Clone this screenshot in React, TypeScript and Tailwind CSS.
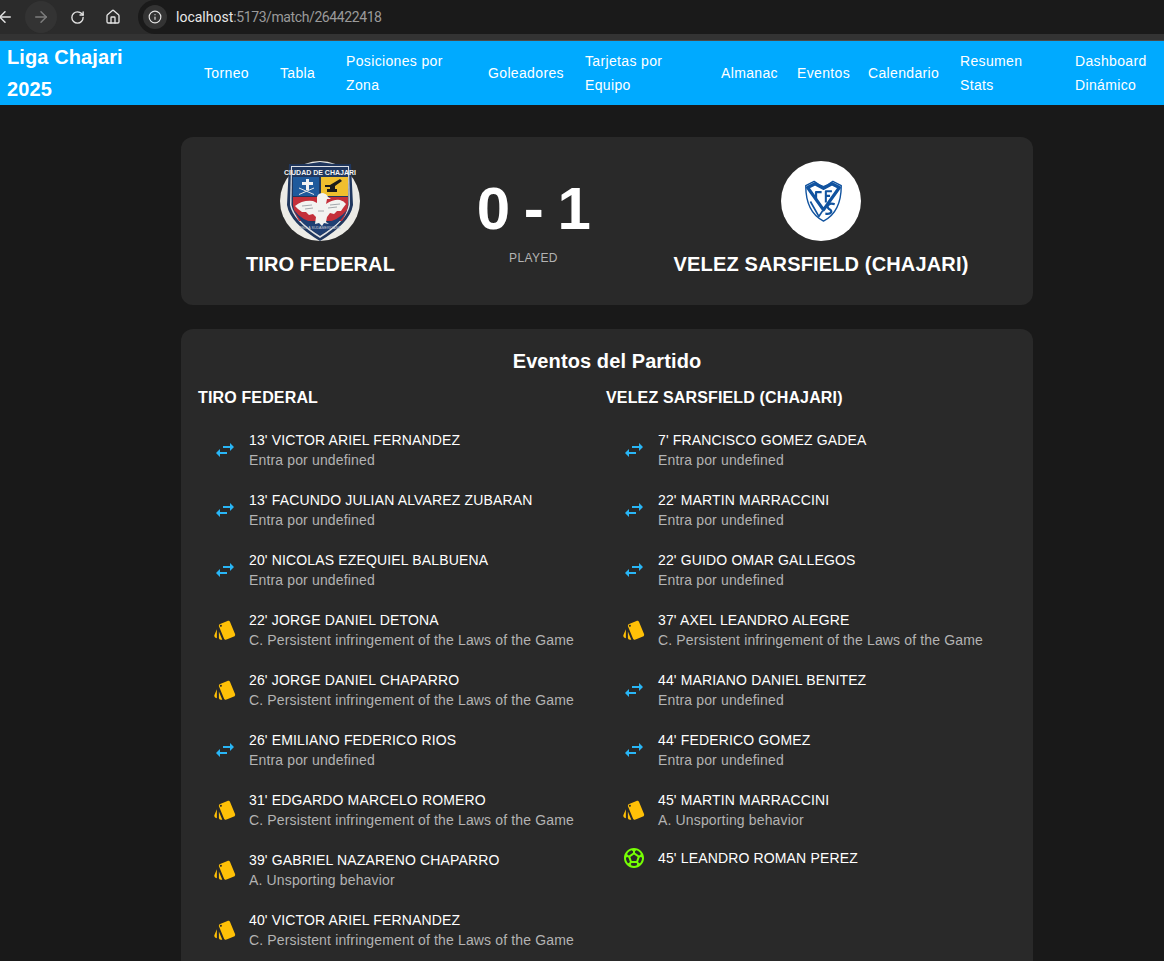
import { ArrowLeft, ArrowRight, RotateCw, House, Info } from "lucide-react";

const navItems = [
  { label: "Torneo", width: "w-[76px]" },
  { label: "Tabla", width: "w-[66px]" },
  { label: "Posiciones por Zona", width: "w-[142px]", inner: "w-[110px]" },
  { label: "Goleadores", width: "w-[97px]" },
  { label: "Tarjetas por Equipo", width: "w-[136px]", inner: "w-[90px]" },
  { label: "Almanac", width: "w-[76px]" },
  { label: "Eventos", width: "w-[71px]" },
  { label: "Calendario", width: "w-[92px]" },
  { label: "Resumen Stats", width: "w-[115px]", inner: "w-[70px]" },
  { label: "Dashboard Dinámico", width: "w-[89px]", inner: "w-[80px]" },
];

type Kind = "sub" | "card" | "goal";
type MatchEvent = { kind: Kind; title: string; detail?: string };

const persistent = "C. Persistent infringement of the Laws of the Game";
const entry = "Entra por undefined";

const homeEvents: MatchEvent[] = [
  { kind: "sub", title: "13' VICTOR ARIEL FERNANDEZ", detail: entry },
  { kind: "sub", title: "13' FACUNDO JULIAN ALVAREZ ZUBARAN", detail: entry },
  { kind: "sub", title: "20' NICOLAS EZEQUIEL BALBUENA", detail: entry },
  { kind: "card", title: "22' JORGE DANIEL DETONA", detail: persistent },
  { kind: "card", title: "26' JORGE DANIEL CHAPARRO", detail: persistent },
  { kind: "sub", title: "26' EMILIANO FEDERICO RIOS", detail: entry },
  { kind: "card", title: "31' EDGARDO MARCELO ROMERO", detail: persistent },
  { kind: "card", title: "39' GABRIEL NAZARENO CHAPARRO", detail: "A. Unsporting behavior" },
  { kind: "card", title: "40' VICTOR ARIEL FERNANDEZ", detail: persistent },
];

const awayEvents: MatchEvent[] = [
  { kind: "sub", title: "7' FRANCISCO GOMEZ GADEA", detail: entry },
  { kind: "sub", title: "22' MARTIN MARRACCINI", detail: entry },
  { kind: "sub", title: "22' GUIDO OMAR GALLEGOS", detail: entry },
  { kind: "card", title: "37' AXEL LEANDRO ALEGRE", detail: persistent },
  { kind: "sub", title: "44' MARIANO DANIEL BENITEZ", detail: entry },
  { kind: "sub", title: "44' FEDERICO GOMEZ", detail: entry },
  { kind: "card", title: "45' MARTIN MARRACCINI", detail: "A. Unsporting behavior" },
  { kind: "goal", title: "45' LEANDRO ROMAN PEREZ" },
];

function EventIcon({ kind }: { kind: Kind }) {
  if (kind === "sub") {
    return (
      <svg viewBox="0 0 24 24" className="h-6 w-6 fill-[#29b6f6]">
        <path d="M6.99 11 3 15l3.99 4v-3H14v-2H6.99v-3zM21 9l-3.99-4v3H10v2h7.01v3L21 9z" />
      </svg>
    );
  }
  if (kind === "card") {
    return (
      <svg viewBox="0 0 24 24" className="h-6 w-6 fill-[#ffc107]">
        <path d="m2.53 19.65 1.34.56v-9.03l-2.43 5.86c-.41 1.02.08 2.19 1.09 2.61zm19.5-3.7L17.07 3.98c-.31-.75-1.04-1.21-1.81-1.23-.26 0-.53.04-.79.15L7.1 5.95c-.75.31-1.21 1.03-1.23 1.8-.01.27.04.54.15.8l4.96 11.97c.31.76 1.05 1.22 1.83 1.23.26 0 .52-.05.77-.15l7.36-3.05c1.02-.42 1.51-1.59 1.09-2.6zM7.88 8.75c-.55 0-1-.45-1-1s.45-1 1-1 1 .45 1 1-.45 1-1 1zm-2 11c0 1.1.9 2 2 2h1.45l-3.45-8.34v6.34z" />
      </svg>
    );
  }
  return (
    <svg viewBox="0 0 24 24" className="h-6 w-6 fill-[#76ff03]">
      <path d="M12 2C6.48 2 2 6.48 2 12s4.48 10 10 10 10-4.48 10-10S17.52 2 12 2zm1 3.3 1.35-.95c1.82.56 3.37 1.76 4.38 3.34l-.39 1.34-1.35.46L13 6.7V5.3zm-3.35-.95L11 5.3v1.4L7.01 9.49l-1.35-.46-.39-1.34c1.01-1.57 2.56-2.77 4.38-3.34zM7.08 17.11l-1.14.1C4.73 15.81 4 13.99 4 12c0-.12.01-.23.02-.35l1-.73 1.38.48 1.46 4.34-.78 1.37zm7.42 2.48c-.79.26-1.63.41-2.5.41s-1.71-.15-2.5-.41l-.69-1.49.64-1.1h5.11l.64 1.11-.7 1.48zM14.27 15H9.73l-1.35-4.02L12 8.44l3.63 2.54L14.27 15zm3.79 2.21-1.14-.1-.79-1.37 1.46-4.34 1.39-.47 1 .73c.01.11.02.22.02.34 0 1.99-.73 3.81-1.94 5.21z" />
    </svg>
  );
}

function HomeCrest() {
  return (
    <svg viewBox="0 0 80 80" className="h-20 w-20">
      <circle cx="40" cy="40" r="40" fill="#ecebe6" />
      <path d="M9 3 Q24 4 40 1 Q56 4 71 3 L73 44 Q70 62 40 80 Q10 62 7 44 Z" fill="#20375e" />
      <path d="M11 5 H69 L70 44 Q67 60 40 77 Q13 60 10 44 Z" fill="#dfe1e4" />
      <path d="M12 6 H68 L68.5 44 Q65.5 59 40 75 Q14.5 59 11.5 44 Z" fill="#20375e" />
      <text x="40" y="13.5" textAnchor="middle" fontSize="7" fontWeight="700" fill="#f4f4f4" fontFamily="Liberation Sans, sans-serif">
        CIUDAD DE CHAJARI
      </text>
      <rect x="13" y="16" width="26" height="19" fill="#1f5a9c" />
      <rect x="41" y="16" width="27" height="19" fill="#f0bf2e" />
      <path d="M26 18 H29 V21 H33 V24 H29 V29 H26 V24 H22 V21 H26 Z" fill="#f2f2f2" />
      <path d="M19 33.5 L34 27 M19 27 L34 33.5" stroke="#e8e8e8" strokeWidth="1" />
      <path d="M45 24 H50 L60 18 L62 20 L55 25 V28 H57 V31 H47 V28 H50 V26 H45 Z" fill="#1b1b1b" />
      <path d="M13 36 H68 V44 Q67 52 62 60 H19 Q14 52 13 44 Z" fill="#c4303a" />
      <path d="M14 49 Q22 60 36 62 H44 Q58 60 67 49 Q62 62 40 74 Q19 62 14 49 Z" fill="#1f3f73" />
      <path d="M15 45 Q22 39 33 40 L37 42 L37 36 Q38 32 43 32 Q47 33 48 36 L51 38 L47 38 L46 43 Q54 38 60 39 Q64 40 66 43 L63 47 L61 50 L57 50 L54 53 L50 52 L47 56 L46 61 L49 63 L44 62 L42 65 L39 62 L35 63 L36 56 L33 53 L29 54 L26 51 L22 51 L18 48 Z" fill="#f3f3f0" />
      <path d="M22 45 L32 44 M50 44 L60 43 M25 48 L33 47 M48 47 L57 46 M38 50 L44 50" stroke="#8f949b" strokeWidth="0.8" />
      <text x="40" y="68" textAnchor="middle" fontSize="3.6" fill="#c9cdd4" fontFamily="Liberation Sans, sans-serif">
        BELLA SUDAMERICANA
      </text>
    </svg>
  );
}

function AwayCrest() {
  return (
    <div className="flex h-20 w-20 items-center justify-center rounded-full bg-white">
      <svg viewBox="0 0 40 46" className="ml-[5px] h-[43px] w-[39px]" fill="none" stroke="#11539f" strokeLinejoin="round">
        <path d="M1 6 L10 1.5 L15 5 L20 7 L25 5 L30 1.5 L39 6 C39 24 34 37 20 44 C6 37 1 24 1 6 Z" strokeWidth="1.5" />
        <path d="M3 8 L11 4 L20 9 L29 4 L37 8 L20 32 Z" strokeWidth="3.4" />
        <path d="M18 13 H12 V20" strokeWidth="2.4" />
        <path d="M22.5 24 V12 H29 M22.5 17 H27" strokeWidth="2.2" />
        <path d="M6 23 L15 39 L19 33" strokeWidth="1.8" />
        <path d="M32 26 C26 24 22 28 26 31 C30 33 29 37 22 36" strokeWidth="2.4" />
      </svg>
    </div>
  );
}

function EventColumn({ team, events, headingClass }: { team: string; events: MatchEvent[]; headingClass: string }) {
  return (
    <div>
      <h3 className={`text-[16px] leading-[24px] font-bold tracking-[0.15px] text-white ${headingClass}`}>{team}</h3>
      <ul className="mt-[10px]">
        {events.map((event) => (
          <li key={event.title} className="flex items-center px-4 py-1.5">
            <div className="w-9 shrink-0">
              <EventIcon kind={event.kind} />
            </div>
            <div className={`text-[14px] leading-5 tracking-[0.15px] ${event.detail ? "my-1" : ""}`}>
              <div className="text-white">{event.title}</div>
              {event.detail && <div className="text-[#b3b3b3]">{event.detail}</div>}
            </div>
          </li>
        ))}
      </ul>
    </div>
  );
}

export default function App() {
  return (
    <div className="flex h-[961px] flex-col overflow-hidden bg-[#191919] font-['Liberation_Sans',Arial,sans-serif] text-white">
      <div className="h-[41px] shrink-0 border-b border-[#4a4a4a] bg-[#333333]">
        <div className="flex h-[34px] items-center bg-[#2b2b2b]">
          <div className="flex w-[138px] shrink-0 items-center text-[#e3e3e3]">
            <ArrowLeft className="ml-[-4px] h-[18px] w-[18px]" strokeWidth={2} />
            <div className="ml-[11px] flex h-8 w-8 items-center justify-center rounded-full bg-[#333333]">
              <ArrowRight className="h-[18px] w-[18px] text-[#7d7d7d]" strokeWidth={2} />
            </div>
            <RotateCw className="ml-[13px] h-[15px] w-[15px]" strokeWidth={2.2} />
            <House className="ml-[20px] h-[16px] w-[16px]" strokeWidth={2} />
          </div>
          <div className="flex h-[34px] flex-1 items-center rounded-l-full bg-[#1a1a1a] pl-[5px] text-[14px]">
            <div className="flex h-6 w-6 items-center justify-center rounded-full bg-[#333333]">
              <Info className="h-[14px] w-[14px] text-[#e3e3e3]" strokeWidth={2} />
            </div>
            <span className="ml-[9px] font-['Roboto',sans-serif] text-[#e8e8e8]">localhost</span>
            <span className="font-['Roboto',sans-serif] tracking-[-0.4px] text-[#9a9a9a]">:5173/match/264422418</span>
          </div>
        </div>
      </div>

      <header className="flex h-16 shrink-0 items-center bg-[#00aaff]">
        <h1 className="w-[204px] shrink-0 pr-[60px] pl-[7px] text-[20px] leading-8 font-bold tracking-[0.1px]">Liga Chajari 2025</h1>
        <nav className="flex">
          {navItems.map((item) => (
            <div key={item.label} className={`flex items-center ${item.width}`}>
              <span className={`block text-[14px] leading-6 font-medium tracking-[0.35px] ${item.inner ?? ""}`}>{item.label}</span>
            </div>
          ))}
        </nav>
      </header>

      <main className="mt-8 ml-[181px] w-[852px]">
        <section className="flex h-[168px] rounded-xl bg-[#292929] px-4">
          <div className="flex w-[246px] flex-col items-center pt-6">
            <HomeCrest />
            <div className="mt-[11px] ml-px text-[20px] leading-6 font-bold tracking-[0.1px]">TIRO FEDERAL</div>
          </div>
          <div className="ml-[33px] flex w-[114px] flex-col items-center pt-9">
            <div className="text-[60px] leading-[72px] font-bold tracking-[-1.5px] whitespace-nowrap">0 - 1</div>
            <div className="mt-[3px] ml-px text-[12px] leading-5 tracking-[0.4px] text-[#b3b3b3]">PLAYED</div>
          </div>
          <div className="ml-[83px] flex w-[296px] flex-col items-center pt-6">
            <AwayCrest />
            <div className="mt-[11px] text-[20px] leading-6 font-bold tracking-[0.15px] whitespace-nowrap">VELEZ SARSFIELD (CHAJARI)</div>
          </div>
        </section>

        <section className="mt-6 min-h-[700px] rounded-xl bg-[#292929] px-4 pt-4">
          <h2 className="mb-[9px] text-center text-[20px] leading-8 font-bold tracking-[0.1px]">Eventos del Partido</h2>
          <div className="grid grid-cols-[409px_1fr]">
            <EventColumn team="TIRO FEDERAL" events={homeEvents} headingClass="pl-px" />
            <EventColumn team="VELEZ SARSFIELD (CHAJARI)" events={awayEvents} headingClass="" />
          </div>
        </section>
      </main>
    </div>
  );
}
